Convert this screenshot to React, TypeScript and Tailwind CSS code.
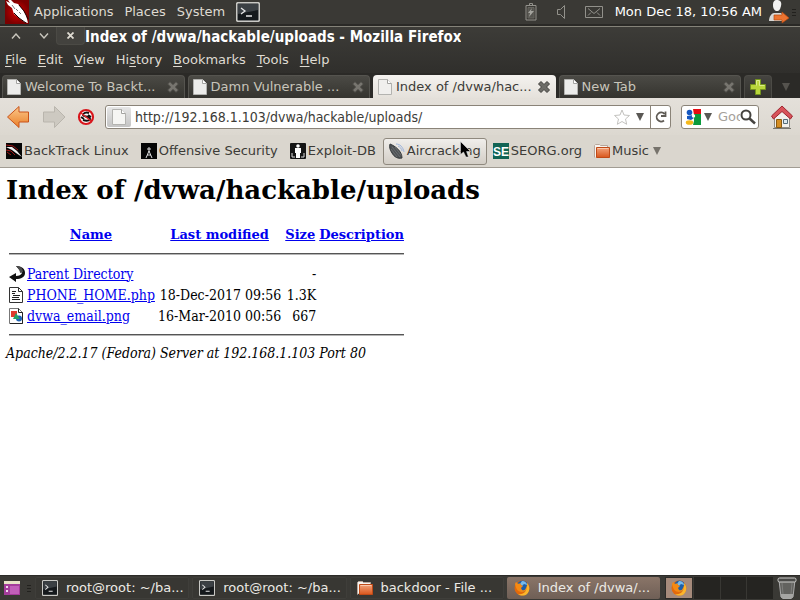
import React from "react";

type Kids = { children?: React.ReactNode };

const DragonIcon = () => (
  <svg viewBox="0 0 24 24" className="h-6 w-6 shrink-0" aria-hidden="true">
    <defs>
      <radialGradient id="dragonBg">
        <stop offset="0" stopColor="#d90000" />
        <stop offset="1" stopColor="#7c0000" />
      </radialGradient>
    </defs>
    <rect width="24" height="24" fill="url(#dragonBg)" />
    <path d="M1 1l4 2-2-3h3l3 3 4 1 5 6 3 5 2 8-4-1-5-4-5-4-2-6-4-3z" fill="#fff" />
    <path d="M7 5l3 4M11 9l2 2M14 12l2 2" stroke="#777" fill="none" />
    <path d="M9 13l5 5 7 5M14 5l5 6 4 8" stroke="#1a0000" fill="none" />
  </svg>
);

const TerminalIcon = ({ wide = false }: { wide?: boolean }) => (
  <svg viewBox="0 0 24 20" preserveAspectRatio="none" className={wide ? "h-5 w-6 shrink-0" : "h-4 w-4 shrink-0"} aria-hidden="true">
    <rect x="0.7" y="0.7" width="22.6" height="18.6" rx="1.5" fill="#23272a" stroke="#c9c9c5" strokeWidth="1.6" />
    <rect x="2" y="2" width="20" height="16" fill="#15191c" />
    <path d="M2 2h20v6L2 12z" fill="#3b4044" />
    <path d="M5 6l4 3-4 3M10 14h6" stroke="#e6e6e6" strokeWidth="1.3" fill="none" />
  </svg>
);

const PageIcon = ({ fill = "#f5f5f3" }: { fill?: string }) => (
  <svg viewBox="0 0 14 16" className="h-4 w-3.5 shrink-0" aria-hidden="true">
    <path d="M0.5 0.5h9l4 4v11h-13z" fill={fill} stroke="#b3b3b0" />
    <path d="M9.5 0.5v4h4" fill="#fff" stroke="#a3a3a0" />
  </svg>
);

const CloseGlyph = ({ fill, stroke }: { fill: string; stroke: string }) => (
  <svg viewBox="0 0 14 14" className="h-3.5 w-3.5" aria-hidden="true">
    <path d="M4 1.5l3 3 3-3L12.5 4l-3 3 3 3-2.5 2.5-3-3-3 3L1.5 10l3-3-3-3z" fill={fill} stroke={stroke} />
  </svg>
);

const FolderIcon = () => (
  <svg viewBox="0 0 16 16" className="h-4 w-4 shrink-0" aria-hidden="true">
    <defs>
      <linearGradient id="folder" x1="0" y1="0" x2="0" y2="1">
        <stop offset="0" stopColor="#f3a47c" />
        <stop offset="1" stopColor="#d9561c" />
      </linearGradient>
    </defs>
    <path d="M0.5 14.5V2.5l1-1h4l1 1h7v3" fill="#f6f4f0" stroke="#b8a79c" />
    <path d="M2.5 4.5h13v10h-13z" fill="url(#folder)" stroke="#c04a17" />
    <path d="M3.5 5.5h11" stroke="#f9c7ab" />
  </svg>
);

const FirefoxIcon = () => (
  <svg viewBox="0 0 16 16" className="h-4 w-4 shrink-0" aria-hidden="true">
    <circle cx="8" cy="8" r="7.5" fill="#e3690b" />
    <circle cx="8.5" cy="6" r="5.5" fill="#1e5fa8" />
    <path d="M8 1c3 0 5 2 5 4l-3-1-2 2-2-2z" fill="#77b9ea" />
    <path d="M1 4l1-2 2 2c2-1 3 0 3 1l2 1-2 2 1 2c3 1 4-1 5-5 1 3 0 7-5 7C3 12 2 8 1 4z" fill="#f58a13" />
    <path d="M13 3c3 3 3 8 0 11-2 2-7 2-9 0 5 1 10-2 9-11z" fill="#fbb52b" />
  </svg>
);

const Grip = () => (
  <span className="flex w-1 flex-col gap-0.5" aria-hidden="true">
    <span className="h-px bg-[#22211e]" />
    <span className="h-px bg-[#22211e]" />
    <span className="h-px bg-[#22211e]" />
  </span>
);

const Down = ({ color = "#5a5854" }: { color?: string }) => (
  <svg viewBox="0 0 8 8" className="h-2 w-2 shrink-0" aria-hidden="true">
    <path d="M0 0h8L4 8z" fill={color} />
  </svg>
);

function TopPanel() {
  return (
    <header className="flex h-6 shrink-0 items-center bg-[#3a3935] pl-[5px] pr-1 text-[#dfdbd2]">
      <DragonIcon />
      <nav className="flex h-6 items-center gap-[11px] pl-[5px]">
        <button>Applications</button>
        <button>Places</button>
        <button>System</button>
        <button aria-label="Terminal">
          <TerminalIcon wide />
        </button>
      </nav>
      <div className="ml-auto flex h-6 items-center">
        <svg viewBox="0 0 12 18" className="mr-[18px] h-[18px] w-3" fill="none" stroke="#92918b" aria-label="Battery">
          <path d="M4.5 2.5v-2h3v2M1 2.5h10v14.5H1z" />
          <path d="M3 4.5h6v10.500H3z" fill="#55544f" stroke="#66655f" />
          <path d="M7 5L3 10h2l-1 4 5-6H6z" fill="#a5a49e" stroke="none" />
        </svg>
        <svg viewBox="0 0 14 14" className="mr-4 h-3.5 w-3.5" fill="none" stroke="#92918b" aria-label="Volume">
          <path d="M2.5 4.5h3l4-4v13l-4-4h-3z" />
        </svg>
        <svg viewBox="0 0 18 12" className="mr-3 h-3 w-[18px]" fill="none" stroke="#92918b" aria-label="Mail">
          <path d="M0.5 0.5h17v11H0.5zM3 2.5l6 5 6-5M3 9.5l3-3M15 9.5l-3-3" />
        </svg>
        <span className="text-white">Mon Dec 18, 10:56 AM</span>
        <svg viewBox="0 0 22 24" className="ml-1.5 mr-0.5 h-6 w-[22px]" aria-label="User">
          <path d="M1 21c0-5 3-8 5-8h6c2 0 4 2 4 6v2z" fill="#d7d7d5" />
          <path d="M9 0c3 0 5 2 4 6-1 4-2 5-4 5S5 9 5 5c0-3 1-5 4-5z" fill="#f2f2f1" />
          <path d="M6 15h8v-3l7 6-7 5v-3H6z" fill="#ec7330" stroke="#b6470e" strokeWidth="0.7" />
        </svg>
        <Grip />
      </div>
    </header>
  );
}

const menus = ["File", "Edit", "View", "History", "Bookmarks", "Tools", "Help"];
const menuKeys = [0, 0, 0, 2, 0, 0, 0];

function WindowChrome() {
  return (
    <div className="shrink-0 border-t-2 border-[#2a2926] bg-[#2f2e2b]">
      <div className="border-t border-[#858379] bg-linear-to-b from-[#3d3c38] to-[#302f2c]">
        <div className="flex h-[22px] items-center text-[#dfdbd2]">
          <button aria-label="Minimize" className="flex w-7 justify-center pb-1 pl-[3px]">
            <svg viewBox="0 0 10 6" className="h-1.5 w-2.5" fill="none" stroke="#c9c6bd" strokeWidth="1.4"><path d="M1 5.5L5 1l4 4.5" /></svg>
          </button>
          <button aria-label="Maximize" className="flex w-7 justify-center pb-1 pl-[3px]">
            <svg viewBox="0 0 10 6" className="h-1.5 w-2.5" fill="none" stroke="#c9c6bd" strokeWidth="1.4"><path d="M1 0.5L5 5l4-4.500" /></svg>
          </button>
          <button aria-label="Close window" className="mb-1 flex h-[18px] w-[29px] items-center justify-center rounded-b border border-t-0 border-[#4b4a45] bg-[#43423e]">
            <svg viewBox="0 0 7 7" className="h-[7px] w-[7px]" stroke="#dfdbd2" strokeWidth="1.8"><path d="M0.5 0.5l6 6M6.5 0.5l-6 6" /></svg>
          </button>
          <h1 className="truncate pb-0.5 font-['DejaVu_Sans_Condensed','DejaVu_Sans',sans-serif] text-[15px] font-bold leading-5 text-white">Index of /dvwa/hackable/uploads - Mozilla Firefox</h1>
        </div>
        <nav className="flex h-6 items-center gap-px pb-0.5 text-[#dfdbd2]">
          {menus.map((m, i) => (
            <button key={m} className="px-[5px]">
              {m.slice(0, menuKeys[i])}
              <span className="underline underline-offset-2">{m[menuKeys[i]]}</span>
              {m.slice(menuKeys[i] + 1)}
            </button>
          ))}
        </nav>
      </div>
    </div>
  );
}

const tabs = ["Welcome To Backt...", "Damn Vulnerable ...", "Index of /dvwa/hac...", "New Tab"];

function TabBar() {
  return (
    <div className="flex h-[25px] shrink-0 gap-[3px] bg-[#2b2a27] pl-0.5 pr-1 pt-0.5">
      {tabs.map((t, i) => {
        const active = i === 2;
        return (
          <div
            key={t}
            className={
              active
                ? "flex min-w-0 flex-1 items-center rounded-t bg-linear-to-b from-[#f4f2ef] to-[#e5e1db] px-[5px] text-[#3c3b37]"
                : "flex min-w-0 flex-1 items-center rounded-t border border-b-0 border-[#55544f] bg-linear-to-b from-[#4b4a45] to-[#35342f] px-1 text-[#c8c5bb]"
            }
          >
            <PageIcon fill={active ? "#f0efed" : "#ececea"} />
            <button className="min-w-0 flex-1 overflow-hidden whitespace-nowrap pl-1 text-left">{t}</button>
            <button aria-label={"Close " + t}>
              {active ? <CloseGlyph fill="#6d6c68" stroke="#3f3e3a" /> : <CloseGlyph fill="#77756f" stroke="#45443f" />}
            </button>
          </div>
        );
      })}
      <button aria-label="Open a new tab" className="flex w-7 items-center justify-center rounded-t border border-b-0 border-[#4c4b46] bg-linear-to-b from-[#454440] to-[#33322e]">
        <svg viewBox="0 0 16 16" className="h-4 w-4"><path d="M5.5 0.5h5v5h5v5h-5v5h-5v-5h-5v-5h5z" fill="#b9d63c" stroke="#74931d" /><path d="M6.5 6.5v-5h3v5h5" fill="none" stroke="#dcec8c" /></svg>
      </button>
      <button aria-label="List all tabs" className="flex w-[21px] items-center justify-center">
        <Down color="#55534e" />
      </button>
    </div>
  );
}

function NavBar() {
  return (
    <div className="flex h-[37px] shrink-0 items-center bg-linear-to-b from-[#e4e0da] to-[#dcd8d0] pl-[7px] pr-[7px]">
      <button aria-label="Back">
        <svg viewBox="0 0 24 24" className="h-6 w-6">
          <defs><linearGradient id="back" x1="0" y1="0" x2="0" y2="1"><stop offset="0" stopColor="#fbc98c" /><stop offset="1" stopColor="#ea7f28" /></linearGradient></defs>
          <path d="M0.5 12L12 1.5v5.500h9.500v10H12v5.500z" fill="url(#back)" stroke="#c9531b" />
        </svg>
      </button>
      <button aria-label="Forward" className="ml-3">
        <svg viewBox="0 0 24 24" className="h-6 w-6"><path d="M22 12L11.5 1.5v5.500H0.5v10h11v5.500z" fill="#cdc9c1" stroke="#b9b5ad" /></svg>
      </button>
      <button aria-label="NoScript" className="ml-2.5 mr-2.5">
        <svg viewBox="0 0 18 18" className="h-[18px] w-[18px]">
          <circle cx="9" cy="9" r="7" fill="#fff" />
          <path d="M12 5c-3-1-6 0-6 2s7 1 7 4c0 2-4 2-7 1M4 9l3 2M11 7l3 2" fill="none" stroke="#111" strokeWidth="2" />
          <path d="M4 5l10 8" stroke="#e0262c" strokeWidth="1.6" />
          <circle cx="9" cy="9" r="7" fill="none" stroke="#d8161c" strokeWidth="2.2" />
        </svg>
      </button>
      <div className="flex h-6 min-w-0 flex-1 items-center rounded-[3px] border border-[#8a8378] bg-white">
        <span className="ml-px flex h-5 w-6 shrink-0 items-center justify-center rounded-xs bg-linear-to-b from-[#e6e6e6] to-[#c4c4c4]"><PageIcon /></span>
        <input aria-label="Location" defaultValue="http://192.168.1.103/dvwa/hackable/uploads/" className="h-5 min-w-0 flex-1 bg-transparent pl-1 font-['DejaVu_Sans_Condensed','DejaVu_Sans',sans-serif] text-[14px] text-[#3c3b37] outline-none" />
        <button aria-label="Bookmark this page">
          <svg viewBox="0 0 16 16" className="h-4 w-4" fill="#fff" stroke="#c3c2bf"><path d="M8 1l2 5 5.500 0.5-4 3.500 1.200 5.300L8 12.5l-4.700 2.800L4.5 10l-4-3.500L6 6z" /></svg>
        </button>
        <button aria-label="Show history" className="px-1.5"><Down /></button>
        <button aria-label="Reload" className="flex h-full w-5 items-center justify-center border-l border-[#8a8378]">
          <svg viewBox="0 0 12 12" className="h-3 w-3" fill="none" stroke="#5f5b55" strokeWidth="1.8"><path d="M9 9.5A4.500 4.500 0 1 1 9.5 3M10.5 0.5V5H6" /></svg>
        </button>
      </div>
      <div className="ml-2.5 flex h-6 w-[78px] shrink-0 items-center rounded-[3px] border border-[#8a8378] bg-white pl-[3px] pr-0.5">
        <button aria-label="Search engine" className="flex items-center gap-[3px]">
          <svg viewBox="0 0 16 16" className="h-4 w-4">
            <path d="M8 0h8v5L9 6z" fill="#e50b12" /><path d="M9 5h7v11H8l1-4z" fill="#0b9a3c" /><path d="M0 9h6v5H2z" fill="#fff" />
            <circle cx="4.5" cy="3.5" r="2.8" fill="#1557c0" /><path d="M2 7l6-1 1 3-3 2-4-1z" fill="#1557c0" />
            <ellipse cx="4.5" cy="13.5" rx="3.7" ry="2.3" fill="#f5b81b" /><circle cx="8.5" cy="7" r="1.7" fill="#fff" />
          </svg>
          <Down />
        </button>
        <input aria-label="Search" placeholder="Google" className="ml-1.5 w-5 min-w-0 flex-1 bg-transparent outline-none placeholder:text-[#a5a19a]" />
        <button aria-label="Go">
          <svg viewBox="0 0 16 16" className="h-4 w-4" fill="none" stroke="#45433f"><circle cx="6" cy="6" r="4.5" strokeWidth="2" /><path d="M9.5 9.5l5.500 5" strokeWidth="2.5" /></svg>
        </button>
      </div>
      <button aria-label="Home" className="ml-3">
        <svg viewBox="0 0 22 24" className="h-6 w-[22px]">
          <path d="M3.5 11L11 4l7.500 7v11.500h-15z" fill="#f2f0ec" stroke="#8e8b86" />
          <path d="M11 1L0.5 11l2 3L11 6.5l8.500 7.500 2-3z" fill="#d8535a" stroke="#9e2630" />
          <path d="M5.5 14.5h5v8h-5z" fill="#d58e24" stroke="#8a5a10" /><path d="M12.5 14.5h4v4h-4z" fill="#dbe7ee" stroke="#536b78" />
          <path d="M2 23.5h18" stroke="#77756f" />
        </svg>
      </button>
    </div>
  );
}

const Box = ({ children }: Kids) => (
  <svg viewBox="0 0 16 16" className="h-4 w-4 shrink-0" aria-hidden="true">{children}</svg>
);

const bookmarks: { label: string; icon: React.ReactNode; hover?: boolean; menu?: boolean }[] = [
  { label: "BackTrack Linux", icon: <Box><rect width="16" height="16" fill="#050505" /><path d="M0 4l6 0 5 4 5 6-6-4-4-3z" fill="#eee" /><path d="M0 2l7 1 5 4M0 7l5 1 4 4M1 9l4 3" stroke="#a01616" fill="none" /></Box> },
  { label: "Offensive Security", icon: <Box><rect width="16" height="16" fill="#050505" /><path d="M8 4v5M6 6h4M8 8l-3 7M8 8l3 7M6 12h4" stroke="#ddd" fill="none" /></Box> },
  { label: "Exploit-DB", icon: <Box><rect width="16" height="16" rx="1" fill="#151515" /><circle cx="8" cy="3" r="1.8" fill="#fff" /><path d="M5 5h6v5h-1v5H6v-5H5z" fill="#fff" /><path d="M2 10v4h3M14 10v4h-3" stroke="#ddd" fill="none" /></Box> },
  { label: "Aircrack-ng", hover: true, icon: <Box><path d="M1 1c5 2 12 7 12 14-4 1-8-1-10-5C1 7 0 4 1 1z" fill="#4f5356" stroke="#34383a" /><path d="M3 4l8 10M2 6l6 8M6 4l6 8" stroke="#7c8082" strokeWidth="0.6" /><path d="M7 1c4 0 7 3 8 8M9 3c2 1 4 3 4 5" stroke="#9db4dc" fill="none" /></Box> },
  { label: "SEORG.org", icon: <svg viewBox="0 0 16 16" className="h-4 w-4 shrink-0 bg-[#116454]" aria-hidden="true"><text x="0" y="13" fontSize="12" fontWeight="bold" fill="#fff" fontFamily="Liberation Sans, sans-serif">SE</text></svg> },
  { label: "Music", icon: <FolderIcon />, menu: true },
];

function BookmarkBar() {
  return (
    <div className="flex h-[33px] shrink-0 items-center border-b border-[#a19c93] bg-[#dad6ce] text-[#3c3b37]">
      {bookmarks.map((b) => (
        <button
          key={b.label}
          className={
            b.hover
              ? "relative ml-px flex h-[27px] items-center gap-0.5 whitespace-nowrap rounded-[3px] border border-[#8f897e] bg-linear-to-b from-[#f0eeeb] to-[#d3cec6] px-[5px]"
              : "flex h-[27px] items-center gap-0.5 whitespace-nowrap border border-transparent px-[5px]"
          }
        >
          {b.icon}
          <span>{b.label}</span>
          {b.menu && <span className="pl-0.5"><Down color="#77736c" /></span>}
          {b.hover && (
            <svg viewBox="0 0 12 18" className="absolute left-[76px] top-0.5 h-[18px] w-3" aria-hidden="true">
              <path d="M0.5 0.5v13l3-2.500 2.500 5h2.500l-2-5.500h4z" fill="#000" stroke="#eee" strokeWidth="0.5" />
            </svg>
          )}
        </button>
      ))}
    </div>
  );
}

const BackIcon = () => (
  <Box><path d="M7 0c6 0 9 3 9 7 0 4-4 6-9 6v3L0 11l7-4v3c3 0 5-1 6-3z" fill="#111" /><path d="M7 0c4 0 7 2 7 6l-3 1c0-3-2-5-4-7z" fill="#4a4a4a" /></Box>
);
const TextIcon = () => (
  <Box><path d="M0.5 0.5h9l4 4v11h-13z" fill="#fff" stroke="#333" /><path d="M9.5 0.5v4h4" fill="none" stroke="#333" /><path d="M3 4.5h4M3 6.5h3M4 8.5h7M3 10.5h7M3 12.5h8" stroke="#222" /></Box>
);
const ImageIcon = () => (
  <Box><path d="M0.5 0.5h9l4 4v11h-13z" fill="#fff" stroke="#777" /><path d="M9.5 0.5v4h4v11H1" fill="none" stroke="#222" /><path d="M2 3h6v6H2z" fill="#e23b2e" /><circle cx="10" cy="10.5" r="3" fill="#1c61b5" /><path d="M7 5l4 6H4z" fill="#25a267" /></Box>
);

const files = [
  { icon: <BackIcon />, name: "Parent Directory", date: "", size: "-" },
  { icon: <TextIcon />, name: "PHONE_HOME.php", date: "18-Dec-2017 09:56", size: "1.3K" },
  { icon: <ImageIcon />, name: "dvwa_email.png", date: "16-Mar-2010 00:56", size: "667" },
];

const linkClass = "text-[#0000ee] underline";

const Rule = () => (
  <tr className="h-4">
    <td colSpan={5} className="px-px"><hr className="h-0.5 border-b border-t border-b-[#b5b5b5] border-t-[#555555]" /></td>
  </tr>
);

function Listing() {
  return (
    <main className="flex-1 bg-white px-1.5 pt-1 font-['DejaVu_Serif_Condensed','DejaVu_Serif',serif] text-[14px] leading-4 text-black">
      <h2 className="font-['DejaVu_Serif',serif] text-[26px] font-bold leading-9">Index of /dvwa/hackable/uploads</h2>
      <table className="mt-4 border-separate border-spacing-0.5 whitespace-nowrap">
        <thead className="font-['DejaVu_Serif',serif] text-[13px]">
          <tr className="h-[18px]">
            <td className="w-4" />
            {["Name", "Last modified", "Size", "Description"].map((h) => (
              <th key={h} scope="col" className="px-px text-center font-bold">
                <a href="#" className={linkClass}>{h}</a>
              </th>
            ))}
          </tr>
        </thead>
        <tbody>
          <Rule />
          {files.map((f) => (
            <tr key={f.name} className="h-[19px]">
              <td className="pl-px">{f.icon}</td>
              <td><a href="#" className={linkClass}>{f.name}</a></td>
              <td className="px-px text-right">{f.date}</td>
              <td className="text-right">{f.size}</td>
              <td />
            </tr>
          ))}
          <Rule />
        </tbody>
      </table>
      <address className="italic">Apache/2.2.17 (Fedora) Server at 192.168.1.103 Port 80</address>
    </main>
  );
}

const tasks = [
  { label: "root@root: ~/ba...", icon: <TerminalIcon /> },
  { label: "root@root: ~/ba...", icon: <TerminalIcon /> },
  { label: "backdoor - File ...", icon: <FolderIcon /> },
  { label: "Index of /dvwa/...", icon: <FirefoxIcon />, active: true },
];

function Taskbar() {
  return (
    <footer className="flex h-[25px] shrink-0 items-center border-t border-[#2c2b28] bg-[#3a3935] pl-1 pr-0.5 text-[#eceae5]">
      <button aria-label="Show desktop" className="mr-[7px]">
        <svg viewBox="0 0 16 14" className="h-3.5 w-4"><rect width="16" height="14" fill="#a43d9b" /><rect width="16" height="3" fill="#e8e4c8" /><path d="M2 5h2v2H2zM2 9h2v2H2z" fill="#f0d9ee" /><rect x="6" y="5" width="9" height="8" fill="#c25fba" /></svg>
      </button>
      <Grip />
      <div className="ml-1 flex min-w-0 flex-1 gap-[3px]">
        {tasks.map((t, i) => (
          <button
            key={i}
            className={
              t.active
                ? "flex h-[22px] min-w-0 flex-1 items-center gap-2 overflow-hidden whitespace-nowrap rounded-xs bg-linear-to-b from-[#8a7568] to-[#6f5f56] pl-[7px]"
                : "flex h-[22px] min-w-0 flex-1 items-center gap-2 overflow-hidden whitespace-nowrap rounded-xs border border-[#3f3e3a] bg-[#383733] pl-1.5"
            }
          >
            {t.icon}
            {t.label}
          </button>
        ))}
      </div>
      <div className="ml-[5px] flex h-[22px] w-[108px] shrink-0 gap-px bg-[#383733]">
        <button aria-label="Workspace 1" className="flex flex-1 items-center justify-center border border-[#2b2a27] bg-[#a58a7b]"><FirefoxIcon /></button>
        <button aria-label="Workspace 2" className="flex-1 bg-[#252421]" />
        <button aria-label="Workspace 3" className="flex-1 bg-[#252421]" />
        <button aria-label="Workspace 4" className="flex-1 bg-[#252421]" />
      </div>
      <button aria-label="Trash" className="ml-1 mr-px">
        <svg viewBox="0 0 20 22" className="h-[22px] w-5"><path d="M2 3h16l-2 17-2 1.500H6L4 20z" fill="#62625f" stroke="#aaa" /><path d="M4 17h12v3l-2 1.500H6L4 20z" fill="#a5a5a3" /><path d="M5 6l1 11M15 6l-1 11" stroke="#7e7e7c" /><rect x="1" y="1" width="18" height="4" rx="1.5" fill="#4a4a48" stroke="#d0d0ce" /></svg>
      </button>
    </footer>
  );
}

export default function App() {
  return (
    <div className="flex min-h-screen flex-col overflow-hidden bg-[#2f2e2b] font-['DejaVu_Sans','Liberation_Sans',sans-serif] text-[13px] leading-4">
      <TopPanel />
      <WindowChrome />
      <TabBar />
      <NavBar />
      <BookmarkBar />
      <Listing />
      <Taskbar />
    </div>
  );
}
